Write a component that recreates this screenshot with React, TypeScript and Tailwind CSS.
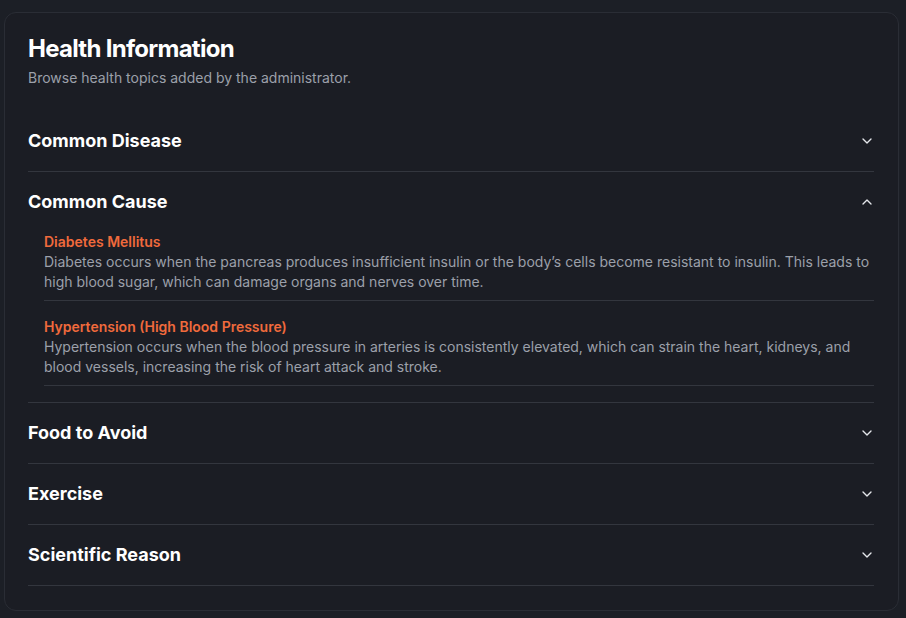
import React from "react";

const Chevron = ({ up }: { up?: boolean }) => (
  <svg width="16" height="16" viewBox="0 0 24 24" fill="none" stroke="#e5e7eb" strokeWidth="2" strokeLinecap="round" strokeLinejoin="round">
    <path d={up ? "m18 15-6-6-6 6" : "m6 9 6 6 6-6"} />
  </svg>
);

const Row = ({ title, open, children }: { title: string; open?: boolean; children?: React.ReactNode }) => (
  <div className="border-b border-[#33363e]">
    <div className="flex items-center justify-between py-4">
      <span className="text-lg leading-7 font-bold text-white">{title}</span>
      <span className="mr-[-1px]"><Chevron up={open} /></span>
    </div>
    {open && children}
  </div>
);

const Sub = ({ title, text }: { title: string; text: string }) => (
  <div className="border-b border-[#33363e] pb-2">
    <div className="text-sm leading-5 font-semibold text-[#f06a3c]">{title}</div>
    <p className="text-sm leading-5 text-[#9ca0aa]">{text}</p>
  </div>
);

export default function App() {
  return (
    <div className="min-h-[618px] bg-[#1c1f26] pt-3 pl-1 pr-[7px] pb-2" style={{ fontFamily: "Inter, 'Noto Sans', sans-serif" }}>
      <div className="rounded-xl border border-[#2a2d35] bg-[#1b1d24] pl-[23px] pr-6 pt-5 pb-6">
        <h1 className="text-2xl leading-8 font-bold text-white tracking-[-0.03em]">Health Information</h1>
        <p className="mt-[3px] text-sm leading-5 text-[#9ca0aa]">Browse health topics added by the administrator.</p>
        <div className="mt-[23px]">
          <Row title="Common Disease" />
          <Row title="Common Cause" open>
            <div className="pl-4 pb-4 flex flex-col gap-4">
              <Sub
                title="Diabetes Mellitus"
                text="Diabetes occurs when the pancreas produces insufficient insulin or the body’s cells become resistant to insulin. This leads to high blood sugar, which can damage organs and nerves over time."
              />
              <Sub
                title="Hypertension (High Blood Pressure)"
                text="Hypertension occurs when the blood pressure in arteries is consistently elevated, which can strain the heart, kidneys, and blood vessels, increasing the risk of heart attack and stroke."
              />
            </div>
          </Row>
          <Row title="Food to Avoid" />
          <Row title="Exercise" />
          <Row title="Scientific Reason" />
        </div>
      </div>
    </div>
  );
}
